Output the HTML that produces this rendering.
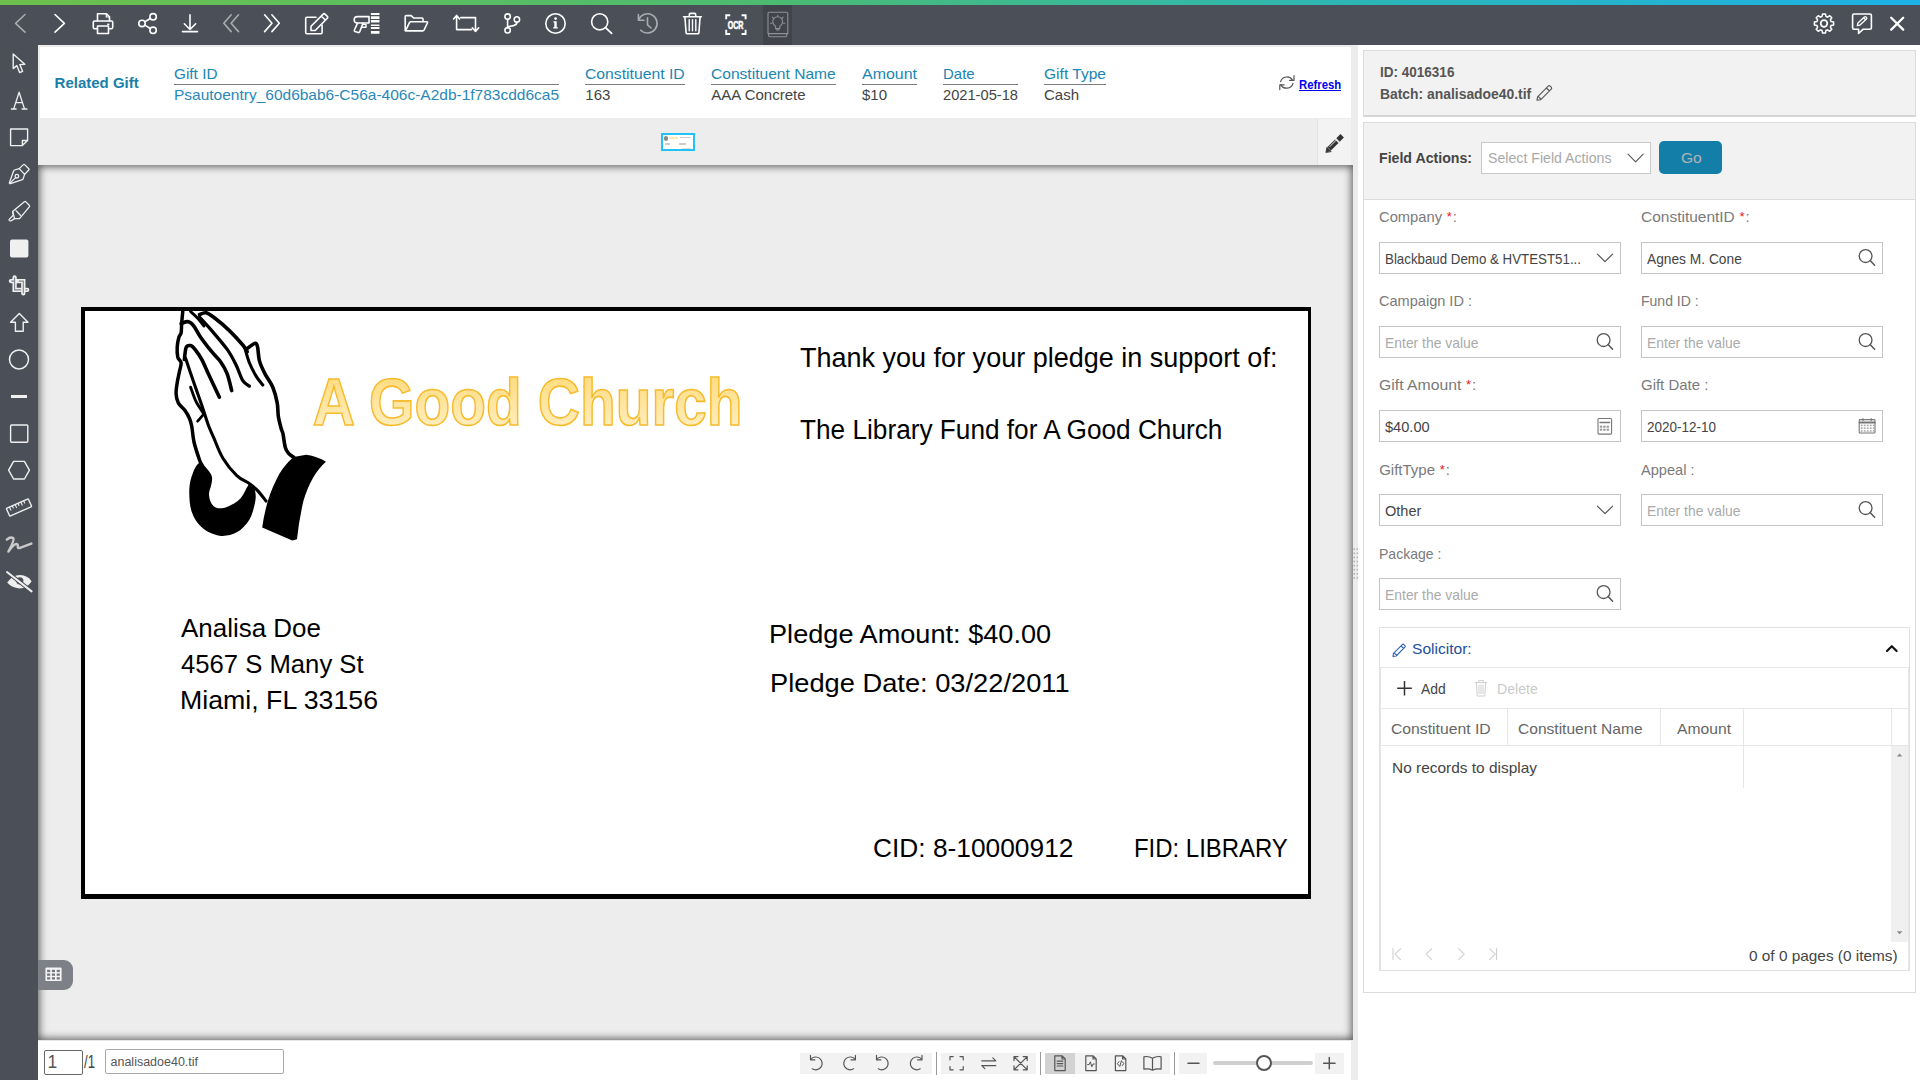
<!DOCTYPE html><html><head><meta charset="utf-8"><style>
*{margin:0;padding:0;box-sizing:border-box}
html,body{width:1920px;height:1080px;overflow:hidden;background:#fff;font-family:"Liberation Sans",sans-serif}
.a{position:absolute}
.t{position:absolute;white-space:pre}
svg{position:absolute;overflow:visible}
</style></head><body>
<div class="a" style="left:0;top:0;width:1920px;height:5px;background:linear-gradient(90deg,#6dc04b 0%,#4cbb72 40%,#2db6b4 70%,#1db1e8 100%)"></div>
<div class="a" style="left:0;top:5px;width:1920px;height:40px;background:#4b4f58"></div>
<div class="a" style="left:0;top:45px;width:38px;height:1035px;background:#4b4f58"></div>
<div class="a" style="left:763px;top:5px;width:29px;height:40px;background:#41444b"></div>
<svg class="a" style="left:0;top:0" width="1920" height="1080" viewBox="0 0 1920 1080" fill="none" stroke="#fff" stroke-width="1.6" stroke-linecap="round" stroke-linejoin="round" ><path d="M25,14.5 L15.6,23.3 L25,32.1" stroke="#a9acb1"/><path d="M55,14.5 L64.4,23.3 L55,32.1"/><path d="M97.5,21 V13.8 H106.5 L109.5,16.8 V21"/><path d="M106.3,14 V17 H109.3" stroke-width="1.2"/><path d="M97.2,28.7 H94.5 Q93.3,28.7 93.3,27.5 V22.3 Q93.3,21 94.5,21 H111.5 Q112.7,21 112.7,22.3 V27.5 Q112.7,28.7 111.5,28.7 H108.8"/><path d="M97.5,26 H108.5 V33.5 H97.5 Z"/><rect x="107.2" y="23.6" width="2.2" height="1.4" fill="#fff" stroke="none"/><circle cx="142" cy="23.4" r="3.2"/><circle cx="153.1" cy="16.8" r="3.2"/><circle cx="153.1" cy="30.3" r="3.2"/><path d="M144.9,21.7 L150.3,18.5 M144.9,25.1 L150.3,28.5"/><path d="M190,14.8 V29.5 M184.3,23.8 L190,29.5 L195.7,23.8 M182.5,31.6 H197.5"/><path d="M231.2,14.8 L223.8,23.2 L231.2,31.6 M238.5,14.8 L231.1,23.2 L238.5,31.6" stroke="#a9acb1"/><path d="M264.6,14.8 L272,23.2 L264.6,31.6 M271.9,14.8 L279.3,23.2 L271.9,31.6"/><path d="M316,17.3 H306.8 Q305.7,17.3 305.7,18.4 V32.6 Q305.7,33.7 306.8,33.7 H321 Q322.1,33.7 322.1,32.6 V25"/><path d="M311,30.5 V26.3 L323.2,14.1 Q324.1,13.2 325,14.1 L327.3,16.4 Q328.2,17.3 327.3,18.2 L315.2,30.5 Z M321.3,16 L325.5,20.2"/><path d="M369,16.6 H357.6 Q354.2,16.6 354.2,19.7 Q354.2,23 357.6,23 H369 Z"/><path d="M357.4,23.4 L354.4,30 Q354,31 355,31.5 L358.2,32.6 Q359.2,32.9 359.6,32 L363,23.4"/><path d="M363.2,24.4 H366 V27.3 H362.4" stroke-width="1.4"/><rect x="370.9" y="13" width="8.6" height="1.9" rx="0.5" fill="#fff" stroke="none"/><rect x="370.9" y="16.3" width="8.6" height="2.8" rx="0.5" fill="#fff" stroke="none"/><rect x="370.9" y="20" width="8.6" height="2.5" rx="0.5" fill="#fff" stroke="none"/><rect x="370.9" y="24.5" width="8.6" height="1.6" rx="0.5" fill="#fff" stroke="none"/><rect x="370.9" y="27" width="8.6" height="2.0" rx="0.5" fill="#fff" stroke="none"/><rect x="370.9" y="31" width="8.6" height="2.8" rx="0.5" fill="#fff" stroke="none"/><path d="M405.2,30.4 V16.6 Q405.2,15.6 406.2,15.6 H411.2 L413.6,18 H422 Q423,18 423,19 V21.6"/><path d="M405.5,30.8 L409.6,22.4 Q410,21.7 410.9,21.7 H426.6 Q427.9,21.7 427.4,23 L424,30.2 Q423.6,30.9 422.8,30.9 H405.8"/><path d="M453.6,19 L456.6,15.4 L459.6,19 M456.6,15.8 V29.6 H471.5 M460.8,17.6 H475.5 V31.5 M472.3,27.8 L475.5,31.5 L478.7,27.8"/><circle cx="507.6" cy="16.6" r="2.7"/><circle cx="507.6" cy="30.3" r="2.7"/><circle cx="516.9" cy="19.4" r="2.7"/><path d="M507.6,19.3 V27.6 M516.9,22.1 Q516.9,25.1 513.6,25.6 L510.2,26.2 Q507.6,26.8 507.6,28"/><circle cx="555.5" cy="23.5" r="9.7"/><circle cx="555.6" cy="18.6" r="1.35" fill="#fff" stroke="none"/><path d="M553.4,21.3 H556.7 V27.2 H557.8 V28.6 H553.2 V27.2 H554.3 V22.6 H553.4 Z" fill="#fff" stroke="none"/><circle cx="599.7" cy="21.8" r="8.1"/><path d="M605.6,27.7 L611.6,33.4" stroke-width="1.8"/><path d="M638.7,19.6 A9.6,9.6 0 1 1 640.7,30.2" stroke="#a9acb1"/><path d="M638.4,14.5 V20.2 H644" stroke="#a9acb1"/><path d="M647.5,17.8 V24.8 L651,28" stroke="#a9acb1"/><path d="M683.5,16.8 H701.4 M689.3,16.6 V14.6 Q689.3,13.4 690.5,13.4 H694.5 Q695.7,13.4 695.7,14.6 V16.6"/><path d="M684.9,17 L686.1,32.6 Q686.2,33.8 687.4,33.8 H697.6 Q698.8,33.8 698.9,32.6 L700.1,17"/><path d="M689.2,19.8 V30.8 M692.5,19.8 V30.8 M695.8,19.8 V30.8" stroke-width="1.4"/><path d="M726.2,19.2 V15.3 H730.2 M741.6,15.3 H745.6 V19.2 M726.2,29.8 V34 H730.2 M741.6,34 H745.6 V29.8" stroke-width="1.9" stroke-linecap="butt" stroke-linejoin="miter"/><text x="735.6" y="28.9" font-family="Liberation Sans" font-weight="bold" font-size="10.6" fill="#fff" stroke="#fff" stroke-width="0.6" text-anchor="middle" textLength="15.8" lengthAdjust="spacingAndGlyphs">OCR</text><path d="M768,33.6 V13.6 Q768,12.3 769.3,12.3 H786.5 Q787.8,12.3 787.8,13.6 V33.6 Z M768.6,33.8 V35.6 Q768.6,36.8 769.8,36.8 H785.6 Q786.8,36.8 786.8,35.6 V33.8" stroke="#8e9197" stroke-width="1.1"/><path d="M775.6,28.6 V26.2 Q772.8,24.6 772.8,21.6 A4.9,4.9 0 0 1 782.6,21.6 Q782.6,24.6 779.8,26.2 V28.6 Z M776.4,30 H779 M777.7,15.2 V16.8 M772.3,17.2 L773.4,18.3 M783.1,17.2 L782,18.3 M770.5,23.2 H771.8 M783.6,23.2 H784.9" stroke="#8e9197" stroke-width="1.1"/><path d="M1831.04,21.55 L1833.59,22.05 L1833.59,24.95 L1831.04,25.45 L1830.35,27.10 L1831.81,29.26 L1829.76,31.31 L1827.60,29.85 L1825.95,30.54 L1825.45,33.09 L1822.55,33.09 L1822.05,30.54 L1820.40,29.85 L1818.24,31.31 L1816.19,29.26 L1817.65,27.10 L1816.96,25.45 L1814.41,24.95 L1814.41,22.05 L1816.96,21.55 L1817.65,19.90 L1816.19,17.74 L1818.24,15.69 L1820.40,17.15 L1822.05,16.46 L1822.55,13.91 L1825.45,13.91 L1825.95,16.46 L1827.60,17.15 L1829.76,15.69 L1831.81,17.74 L1830.35,19.90 Z" stroke-width="1.5"/><circle cx="1824" cy="23.5" r="3.3" stroke-width="1.7"/><path d="M1854,29.2 Q1852.6,29.2 1852.6,27.8 V15.4 Q1852.6,14 1854,14 H1870 Q1871.4,14 1871.4,15.4 V27.8 Q1871.4,29.2 1870,29.2 H1863.2 L1858.6,33.5 V29.2 Z" stroke-width="1.6"/><path d="M1857.3,25.6 L1857.9,23 L1864.4,17 Q1865.2,16.3 1866,17 L1866.5,17.5 Q1867.2,18.3 1866.5,19 L1860,25 Z M1863.8,18 L1865.6,19.8" stroke-width="1.3"/><path d="M1891.2,17.8 L1903.2,29.6 M1903.2,17.8 L1891.2,29.6" stroke-width="2.3"/></svg>
<div class="a" style="left:38px;top:45px;width:1320px;height:120px;background:#ececec"></div>
<div class="a" style="left:40px;top:47px;width:1311px;height:71px;background:#fff"></div>
<div class="t" style="left:54.60px;top:75.30px;font-size:15px;line-height:15px;color:#1a7fa8;font-weight:bold;font-family:'Liberation Sans',sans-serif;">Related Gift</div>
<div class="t" style="left:174.00px;top:66.00px;font-size:15px;line-height:15px;color:#1b86b3;font-weight:normal;font-family:'Liberation Sans',sans-serif;transform:scaleX(1.0232);transform-origin:0 0;">Gift ID</div>
<div class="a" style="left:174.0px;top:83.6px;width:385.0px;height:1.2px;background:#7d7d7d"></div>
<div class="t" style="left:174.00px;top:87.10px;font-size:15px;line-height:15px;color:#2a88b8;font-weight:normal;font-family:'Liberation Sans',sans-serif;transform:scaleX(1.0328);transform-origin:0 0;">Psautoentry_60d6bab6-C56a-406c-A2db-1f783cdd6ca5</div>
<div class="t" style="left:585.30px;top:66.00px;font-size:15px;line-height:15px;color:#1b86b3;font-weight:normal;font-family:'Liberation Sans',sans-serif;transform:scaleX(1.0490);transform-origin:0 0;">Constituent ID</div>
<div class="a" style="left:585.3px;top:83.6px;width:99.7px;height:1.2px;background:#7d7d7d"></div>
<div class="t" style="left:585.30px;top:87.10px;font-size:15px;line-height:15px;color:#444;font-weight:normal;font-family:'Liberation Sans',sans-serif;">163</div>
<div class="t" style="left:711.30px;top:66.00px;font-size:15px;line-height:15px;color:#1b86b3;font-weight:normal;font-family:'Liberation Sans',sans-serif;transform:scaleX(1.0386);transform-origin:0 0;">Constituent Name</div>
<div class="a" style="left:711.3px;top:83.6px;width:124.7px;height:1.2px;background:#7d7d7d"></div>
<div class="t" style="left:711.30px;top:87.10px;font-size:15px;line-height:15px;color:#444;font-weight:normal;font-family:'Liberation Sans',sans-serif;">AAA Concrete</div>
<div class="t" style="left:862.00px;top:66.00px;font-size:15px;line-height:15px;color:#1b86b3;font-weight:normal;font-family:'Liberation Sans',sans-serif;transform:scaleX(1.0638);transform-origin:0 0;">Amount</div>
<div class="a" style="left:862.0px;top:83.6px;width:55.0px;height:1.2px;background:#7d7d7d"></div>
<div class="t" style="left:862.00px;top:87.10px;font-size:15px;line-height:15px;color:#444;font-weight:normal;font-family:'Liberation Sans',sans-serif;">$10</div>
<div class="t" style="left:943.00px;top:66.00px;font-size:15px;line-height:15px;color:#1b86b3;font-weight:normal;font-family:'Liberation Sans',sans-serif;">Date</div>
<div class="a" style="left:943.0px;top:83.6px;width:75.0px;height:1.2px;background:#7d7d7d"></div>
<div class="t" style="left:943.00px;top:87.10px;font-size:15px;line-height:15px;color:#444;font-weight:normal;font-family:'Liberation Sans',sans-serif;transform:scaleX(0.9774);transform-origin:0 0;">2021-05-18</div>
<div class="t" style="left:1044.00px;top:66.00px;font-size:15px;line-height:15px;color:#1b86b3;font-weight:normal;font-family:'Liberation Sans',sans-serif;transform:scaleX(1.0374);transform-origin:0 0;">Gift Type</div>
<div class="a" style="left:1044.0px;top:83.6px;width:62.0px;height:1.2px;background:#7d7d7d"></div>
<div class="t" style="left:1044.00px;top:87.10px;font-size:15px;line-height:15px;color:#444;font-weight:normal;font-family:'Liberation Sans',sans-serif;">Cash</div>
<svg class="a" style="left:0;top:0" width="1920" height="1080" viewBox="0 0 1920 1080" fill="none" stroke="#555" stroke-width="1.2" stroke-linecap="round" stroke-linejoin="round" ><path d="M1292.6,80.2 A6.6,6.6 0 0 0 1280.6,81.6" /><path d="M1280.8,84.6 A6.6,6.6 0 0 0 1293,83.4"/><path d="M1294,75.6 V80.4 H1289.6 M1279.8,89.6 V84.8 H1284.2"/></svg>
<div class="t" style="left:1298.80px;top:78.94px;font-size:12px;line-height:12px;color:#0000ee;font-weight:bold;font-family:'Liberation Sans',sans-serif;transform:scaleX(0.9443);transform-origin:0 0;">Refresh</div>
<div class="a" style="left:1298.6px;top:89.6px;width:42.4px;height:1.2px;background:#0000ee"></div>
<div class="a" style="left:38px;top:118px;width:1314px;height:47px;background:#ededed"></div>
<div class="a" style="left:1317px;top:119px;width:34px;height:46px;background:#f3f3f3;border-left:1px solid #e2e2e2"></div>
<svg class="a" style="left:0;top:0" width="1920" height="1080" viewBox="0 0 1920 1080" fill="none" stroke="none" stroke-width="1.6" stroke-linecap="round" stroke-linejoin="round" ><path d="M1329.2,148.8 L1336.8,141.2" stroke="#333" stroke-width="4.8" stroke-linecap="butt"/><path d="M1338,140 L1342.2,135.8" stroke="#333" stroke-width="4.8" stroke-linecap="butt" stroke-linejoin="round"/><path d="M1326,152.2 L1326.9,147.3 L1331,151.3 Z" fill="#333" stroke="#333" stroke-width="0.8"/><path d="M1329.8,146.6 L1336.4,140" stroke="#f3f3f3" stroke-width="0.9"/></svg>
<div class="a" style="left:660.5px;top:133.3px;width:34px;height:18.2px;border:2px solid #22c1f8;background:#fff"></div>
<div class="a" style="left:664px;top:136px;width:4px;height:5px;background:#555;border-radius:2px;opacity:.7"></div>
<div class="a" style="left:669px;top:137px;width:9px;height:1.5px;background:#ffe9a8"></div>
<div class="a" style="left:680px;top:136.5px;width:11px;height:1px;background:#ccc"></div>
<div class="a" style="left:665px;top:143px;width:5px;height:2px;background:#ccc"></div>
<div class="a" style="left:679px;top:143px;width:7px;height:1.5px;background:#ccc"></div>
<div class="a" style="left:682px;top:148px;width:9px;height:1px;background:#ddd"></div>
<div class="a" style="left:1351px;top:45px;width:7px;height:1035px;background:#ececec"></div>
<div class="a" style="left:38px;top:165px;width:1315px;height:875px;background:#ededed;box-shadow:inset 0 0 8px 1px rgba(0,0,0,.68)"></div>
<svg class="a" style="left:0;top:0" width="1920" height="1080" viewBox="0 0 1920 1080" fill="#b2b2b2" stroke="none" stroke-width="1.6" stroke-linecap="round" stroke-linejoin="round" ><rect x="1353.4" y="548.4" width="1.6" height="1.6"/><rect x="1356.6" y="548.4" width="1.6" height="1.6"/><rect x="1353.4" y="552.5" width="1.6" height="1.6"/><rect x="1356.6" y="552.5" width="1.6" height="1.6"/><rect x="1353.4" y="556.6" width="1.6" height="1.6"/><rect x="1356.6" y="556.6" width="1.6" height="1.6"/><rect x="1353.4" y="560.7" width="1.6" height="1.6"/><rect x="1356.6" y="560.7" width="1.6" height="1.6"/><rect x="1353.4" y="564.8" width="1.6" height="1.6"/><rect x="1356.6" y="564.8" width="1.6" height="1.6"/><rect x="1353.4" y="568.9" width="1.6" height="1.6"/><rect x="1356.6" y="568.9" width="1.6" height="1.6"/><rect x="1353.4" y="573.0" width="1.6" height="1.6"/><rect x="1356.6" y="573.0" width="1.6" height="1.6"/><rect x="1353.4" y="577.1" width="1.6" height="1.6"/><rect x="1356.6" y="577.1" width="1.6" height="1.6"/></svg>
<div class="a" style="left:81px;top:307px;width:1230px;height:592px;background:#fff;border:solid #000;border-width:4px 3px 5px 4px"></div>
<div class="t" style="left:800.10px;top:344.14px;font-size:27.6px;line-height:27.6px;color:#000;font-weight:normal;font-family:'Liberation Sans',sans-serif;transform:scaleX(0.9787);transform-origin:0 0;">Thank you for your pledge in support of:</div>
<div class="t" style="left:800.10px;top:416.64px;font-size:27.0px;line-height:27.0px;color:#000;font-weight:normal;font-family:'Liberation Sans',sans-serif;transform:scaleX(0.9705);transform-origin:0 0;">The Library Fund for A Good Church</div>
<div class="t" style="left:181.40px;top:614.62px;font-size:26.2px;line-height:26.2px;color:#000;font-weight:normal;font-family:'Liberation Sans',sans-serif;transform:scaleX(0.9914);transform-origin:0 0;">Analisa Doe</div>
<div class="t" style="left:180.60px;top:650.62px;font-size:26.2px;line-height:26.2px;color:#000;font-weight:normal;font-family:'Liberation Sans',sans-serif;transform:scaleX(0.9799);transform-origin:0 0;">4567 S Many St</div>
<div class="t" style="left:179.90px;top:686.92px;font-size:26.2px;line-height:26.2px;color:#000;font-weight:normal;font-family:'Liberation Sans',sans-serif;transform:scaleX(1.0202);transform-origin:0 0;">Miami, FL 33156</div>
<div class="t" style="left:768.70px;top:620.82px;font-size:26.2px;line-height:26.2px;color:#000;font-weight:normal;font-family:'Liberation Sans',sans-serif;transform:scaleX(1.0364);transform-origin:0 0;">Pledge Amount: $40.00</div>
<div class="t" style="left:770.00px;top:669.52px;font-size:26.2px;line-height:26.2px;color:#000;font-weight:normal;font-family:'Liberation Sans',sans-serif;transform:scaleX(1.0410);transform-origin:0 0;">Pledge Date: 03/22/2011</div>
<div class="t" style="left:873.40px;top:835.28px;font-size:26.6px;line-height:26.6px;color:#000;font-weight:normal;font-family:'Liberation Sans',sans-serif;transform:scaleX(0.9894);transform-origin:0 0;">CID: 8-10000912</div>
<div class="t" style="left:1134.20px;top:835.28px;font-size:26.6px;line-height:26.6px;color:#000;font-weight:normal;font-family:'Liberation Sans',sans-serif;transform:scaleX(0.8997);transform-origin:0 0;">FID: LIBRARY</div>
<svg class="a" style="left:0;top:0" width="1920" height="1080" viewBox="0 0 1920 1080"><defs><linearGradient id="yg" x1="0" y1="0" x2="0" y2="1"><stop offset="0" stop-color="#fed872"/><stop offset="1" stop-color="#fff1ca"/></linearGradient></defs><text x="312.8" y="424.8" font-family="Liberation Sans" font-weight="bold" font-size="66" fill="url(#yg)" stroke="#f8bb2c" stroke-width="1.6" textLength="429.6" lengthAdjust="spacingAndGlyphs">A Good Church</text></svg>
<svg class="a" style="left:165px;top:300px" width="170" height="245" viewBox="165 300 170 245"><path d="M199.7,462.8 C197.2,463.4 194.5,468.8 192.8,473.2 C191.1,477.6 189.5,483.0 189.3,489.4 C189.1,495.8 189.5,505.0 191.6,511.4 C193.7,517.8 197.4,523.5 202.0,527.6 C206.6,531.7 213.6,534.9 219.4,535.7 C225.2,536.5 231.8,535.0 236.8,532.3 C241.8,529.6 246.4,524.7 249.5,519.5 C252.6,514.3 254.4,506.0 255.3,501.0 C256.2,496.0 255.5,492.4 254.7,489.4 C253.9,486.4 251.8,483.5 250.6,483.1 C249.3,482.7 248.9,484.5 247.2,487.1 C245.5,489.7 243.5,495.4 240.2,498.7 C236.9,502.0 231.3,505.2 227.5,506.8 C223.7,508.4 219.8,508.6 217.1,508.0 C214.4,507.4 212.7,505.6 211.3,503.3 C210.0,501.0 209.0,497.2 209.0,494.1 C209.0,491.0 210.8,487.7 211.3,484.8 C211.8,481.9 212.5,479.2 211.9,476.7 C211.3,474.2 209.8,472.1 207.8,469.8 C205.8,467.5 202.2,462.2 199.7,462.8 Z" fill="#000"/><path d="M293.5,457 L306.2,454.7 Q318,456.5 325.9,461.7 Q311,475 303.4,501 Q298.6,522 297,539.2 L292.3,540.4 L262.2,527.6 Q266,500 276.1,480.2 Q282,467 293.5,457 Z" fill="#000"/><path d="M182.8,311.1 C182.6,313.1 182.0,319.2 181.7,322.8 C181.4,326.4 181.6,330.4 181.1,332.8 C180.6,335.2 179.6,334.8 178.9,337.2 C178.2,339.6 177.4,343.9 177.2,347.2 C177.0,350.5 177.2,354.6 177.8,357.2 C178.5,359.8 180.8,360.4 181.1,362.8 C181.4,365.2 180.1,368.4 179.4,371.7 C178.8,375.0 177.8,379.1 177.2,382.8 C176.6,386.5 175.9,390.6 176.1,393.9 C176.3,397.2 176.8,400.0 178.3,402.8 C179.8,405.6 183.2,408.0 185.0,410.6 C186.8,413.2 188.3,415.7 189.4,418.3 C190.5,420.9 190.9,422.1 191.7,426.0 C192.5,429.9 192.7,436.2 194.0,442.0 C195.3,447.8 198.4,456.7 199.7,460.5 C201.0,464.3 201.6,464.2 202.0,465.0" fill="none" stroke="#000" stroke-width="3.5" stroke-linecap="round" stroke-linejoin="round"/><path d="M181.1,323.5 C182.3,323.2 186.2,321.3 188.3,321.7 C190.4,322.1 191.9,323.5 193.9,326.1 C195.9,328.7 197.6,332.9 200.6,337.2 C203.6,341.5 208.4,347.6 211.7,351.7 C215.0,355.8 218.0,358.0 220.6,361.7 C223.2,365.4 225.3,369.1 227.2,373.9 C229.0,378.7 230.9,387.8 231.7,390.6" fill="none" stroke="#000" stroke-width="3.6" stroke-linecap="round" stroke-linejoin="round"/><path d="M184.4,359.4 C184.7,357.4 185.1,349.9 186.1,347.6 C187.1,345.3 189.1,345.3 190.6,345.6 C192.1,345.9 193.2,347.1 195.0,349.4 C196.8,351.7 199.3,354.9 201.7,359.4 C204.1,363.8 206.4,369.8 209.4,376.1 C212.4,382.4 217.7,393.7 219.4,397.2" fill="none" stroke="#000" stroke-width="3.6" stroke-linecap="round" stroke-linejoin="round"/><path d="M185.6,358.3 C187.0,362.4 191.2,375.0 193.9,382.8 C196.6,390.6 199.3,398.0 201.7,405.0 C204.1,412.0 206.3,419.6 208.3,425.0 C210.3,430.4 211.2,431.9 213.6,437.4 C216.0,442.9 219.0,451.8 222.9,458.2 C226.8,464.6 232.4,471.4 236.8,475.6 C241.2,479.9 246.0,481.2 249.5,483.7 C253.0,486.2 254.9,487.7 257.6,490.6 C260.4,493.5 264.6,499.3 266.0,501.0" fill="none" stroke="#000" stroke-width="3.1" stroke-linecap="round" stroke-linejoin="round"/><path d="M190.6,387.2 C191.5,389.6 193.9,397.2 196.1,401.7 C198.3,406.1 202.6,411.9 203.9,413.9" fill="none" stroke="#000" stroke-width="2.9" stroke-linecap="round" stroke-linejoin="round"/><path d="M203.9,413.9 C202.8,415.1 198.7,420.0 197.6,421.2" fill="none" stroke="#000" stroke-width="2.7" stroke-linecap="round" stroke-linejoin="round"/><path d="M199.5,314.6 C200.6,314.3 203.5,312.2 206.1,312.8 C208.7,313.4 211.1,315.3 215.0,318.3 C218.9,321.3 224.8,326.2 229.4,330.6 C234.0,335.1 239.8,341.5 242.8,345.0 C245.8,348.5 246.5,350.6 247.2,351.7" fill="none" stroke="#000" stroke-width="3.6" stroke-linecap="round" stroke-linejoin="round"/><path d="M246.0,349.5 C247.5,348.5 253.1,343.7 255.0,343.3 C256.9,342.9 256.9,344.3 257.6,347.2 C258.3,350.1 258.2,356.2 259.4,360.6 C260.6,365.1 262.8,369.5 265.0,373.9 C267.2,378.3 270.8,382.4 272.8,387.2 C274.8,392.0 276.3,398.0 277.2,402.8 C278.1,407.6 277.7,411.9 278.3,416.1 C278.9,420.3 280.2,425.0 281.0,428.0 C281.8,431.0 282.3,430.6 283.0,433.9 C283.7,437.2 284.4,444.5 285.4,447.8 C286.4,451.1 287.4,452.0 288.8,453.6 C290.2,455.2 293.1,456.9 294.0,457.5" fill="none" stroke="#000" stroke-width="3.6" stroke-linecap="round" stroke-linejoin="round"/><path d="M199.5,317.2 C201.5,319.4 207.1,325.2 211.7,330.6 C216.3,336.0 223.1,343.7 227.2,349.4 C231.3,355.1 233.5,359.8 236.1,365.0 C238.7,370.2 240.6,377.1 242.8,380.6 C245.0,384.1 248.3,385.2 249.4,386.1" fill="none" stroke="#000" stroke-width="3.3" stroke-linecap="round" stroke-linejoin="round"/><path d="M245.0,348.3 C245.7,350.7 247.6,358.2 249.4,362.8 C251.2,367.4 253.9,372.4 256.1,376.1 C258.3,379.8 261.7,383.5 262.8,385.0" fill="none" stroke="#000" stroke-width="3.1" stroke-linecap="round" stroke-linejoin="round"/><path d="M190.5,311.5 C191.5,312.4 194.2,314.6 196.5,317.0 C198.8,319.4 202.8,324.5 204.0,326.0" fill="none" stroke="#000" stroke-width="2.9" stroke-linecap="round" stroke-linejoin="round"/></svg>
<div class="a" style="left:38px;top:1040px;width:1313px;height:40px;background:#fff;border-top:1px solid #e6e6e6"></div>
<div class="a" style="left:44.3px;top:1050px;width:38.3px;height:24.5px;border:1px solid #666;border-radius:2px;background:#fff"></div>
<div class="t" style="left:47.60px;top:1053.99px;font-size:17.5px;line-height:17.5px;color:#555;font-weight:normal;font-family:'Liberation Sans',sans-serif;">1</div>
<div class="t" style="left:84.20px;top:1053.99px;font-size:17.5px;line-height:17.5px;color:#444;font-weight:normal;font-family:'Liberation Sans',sans-serif;transform:scaleX(0.7529);transform-origin:0 0;">/1</div>
<div class="a" style="left:104.5px;top:1049.3px;width:179.3px;height:25.2px;border:1px solid #aaa;border-radius:2px;background:#fff"></div>
<div class="t" style="left:110.50px;top:1056.22px;font-size:12.5px;line-height:12.5px;color:#555;font-weight:normal;font-family:'Liberation Sans',sans-serif;">analisadoe40.tif</div>
<div class="a" style="left:38px;top:959.8px;width:35px;height:30.2px;background:#7d8187;border-radius:0 9px 9px 0"></div>
<svg class="a" style="left:0;top:0" width="1920" height="1080" viewBox="0 0 1920 1080" fill="none" stroke="none" stroke-width="1.6" stroke-linecap="round" stroke-linejoin="round" ><rect x="45.4" y="967.4" width="16.2" height="13.7" rx="1.2" fill="#f4f4f4"/><rect x="47.1" y="969.8" width="3.1" height="2.3" fill="#74777d"/><rect x="47.1" y="973.5" width="3.1" height="2.3" fill="#74777d"/><rect x="47.1" y="977.2" width="3.1" height="2.3" fill="#74777d"/><rect x="51.9" y="969.8" width="3.1" height="2.3" fill="#74777d"/><rect x="51.9" y="973.5" width="3.1" height="2.3" fill="#74777d"/><rect x="51.9" y="977.2" width="3.1" height="2.3" fill="#74777d"/><rect x="56.7" y="969.8" width="3.1" height="2.3" fill="#74777d"/><rect x="56.7" y="973.5" width="3.1" height="2.3" fill="#74777d"/><rect x="56.7" y="977.2" width="3.1" height="2.3" fill="#74777d"/></svg>
<div class="a" style="left:799.7px;top:1052.5px;width:132.5px;height:21.3px;background:#f2f2f2"></div>
<div class="a" style="left:936px;top:1052px;width:1px;height:23px;background:#9a9a9a"></div>
<div class="a" style="left:941px;top:1052.5px;width:94.6px;height:21.3px;background:#f2f2f2"></div>
<div class="a" style="left:1040px;top:1052px;width:1px;height:23px;background:#9a9a9a"></div>
<div class="a" style="left:1045px;top:1052.5px;width:124.7px;height:21.3px;background:#f2f2f2"></div>
<div class="a" style="left:1045px;top:1052.5px;width:29.7px;height:21.3px;background:#d2d2d2"></div>
<div class="a" style="left:1174px;top:1052px;width:1px;height:23px;background:#9a9a9a"></div>
<div class="a" style="left:1179.4px;top:1052.5px;width:28.1px;height:21.3px;background:#f2f2f2"></div>
<div class="a" style="left:1315px;top:1052.5px;width:29px;height:21.3px;background:#f2f2f2"></div>
<div class="a" style="left:1212.8px;top:1061.3px;width:100px;height:3.6px;background:#cfcfcf;border-radius:2px"></div>
<div class="a" style="left:1256.4px;top:1055.2px;width:16px;height:16px;border:2px solid #555;border-radius:50%;background:#fff"></div>
<svg class="a" style="left:0;top:0" width="1920" height="1080" viewBox="0 0 1920 1080" fill="none" stroke="#555" stroke-width="1.2" stroke-linecap="round" stroke-linejoin="round" ><g><path d="M810.9,1059.2 A6.4,6.4 0 1 1 812.3,1068.8" /><path d="M810.5,1055.4 V1059.8 H814.9"/></g><g transform="translate(1698.8,0) scale(-1,1)"><path d="M843.8,1059.2 A6.4,6.4 0 1 1 845.1999999999999,1068.8" /><path d="M843.4,1055.4 V1059.8 H847.8"/></g><g><path d="M876.9,1059.2 A6.4,6.4 0 1 1 878.3,1068.8" /><path d="M876.5,1055.4 V1059.8 H880.9"/></g><g transform="translate(1832,0) scale(-1,1)"><path d="M910.4,1059.2 A6.4,6.4 0 1 1 911.8,1068.8" /><path d="M910,1055.4 V1059.8 H914.4"/></g><path d="M950.0,1059.8 V1056.6000000000001 H953.2 M960.0,1056.6000000000001 H963.2 V1059.8 M950.0,1066.6000000000001 V1069.8 H953.2 M960.0,1069.8 H963.2 V1066.6000000000001"/><path d="M981.8,1060.8 H995.8 L992.8,1057.8 M995.8,1065.6000000000001 H981.8 L984.8,1068.6000000000001"/><path d="M1014.2,1056.8 L1027.0,1069.6000000000001 M1027.0,1056.8 L1014.2,1069.6000000000001 M1014.0,1060.6000000000001 V1056.6000000000001 H1018.0 M1023.2,1056.6000000000001 H1027.2 V1060.6000000000001 M1014.0,1065.8 V1069.8 H1018.0 M1023.2,1069.8 H1027.2 V1065.8"/><path d="M1054.8,1055.8 H1062.2 L1065.2,1058.8 V1070.6000000000001 H1054.8 Z M1062,1056.0 V1059.0 H1065"/><path d="M1085.8,1055.8 H1093.2 L1096.2,1058.8 V1070.6000000000001 H1085.8 Z M1093,1056.0 V1059.0 H1096"/><path d="M1115.3999999999999,1055.8 H1122.8 L1125.8,1058.8 V1070.6000000000001 H1115.3999999999999 Z M1122.6,1056.0 V1059.0 H1125.6"/><path d="M1057.2,1061.2 H1062.8 M1057.2,1063.6 H1062.8 M1057.2,1066 H1062.8"/><path d="M1087.6,1064.6 H1089.2 L1090.4,1061.8 L1091.8,1066.8 L1093,1064 H1094.4" stroke-width="1"/><path d="M1119,1061.6 L1117.4,1063.6 L1119,1065.6 M1122.2,1061.6 L1123.8,1063.6 L1122.2,1065.6 M1121.4,1060.8 L1119.8,1066.4" stroke-width="1"/><path d="M1152.5,1058.2 Q1148.5,1055.8 1143.9,1056.8 V1069.2 Q1148.5,1068.2 1152.5,1070.2 Q1156.5,1068.2 1161.1,1069.2 V1056.8 Q1156.5,1055.8 1152.5,1058.2 V1070.2"/><path d="M1188,1063.2 H1199 M1323.6,1063.2 H1335 M1329.3,1057.6000000000001 V1068.8" stroke-width="1.5"/></svg>
<svg class="a" style="left:0;top:0" width="1920" height="1080" viewBox="0 0 1920 1080" fill="none" stroke="#f0f0f0" stroke-width="1.6" stroke-linecap="round" stroke-linejoin="round" ><path d="M13.2,54 V68.6 L16.8,65.6 L19.6,72.6 L22.6,71.3 L19.8,64.6 L24.8,64.2 Z" stroke-width="1.4"/><path d="M13.7,108.9 L19.1,92.2 L24.5,108.9 M15.8,102.6 H22.4 M10.9,109 H16.6 M21.6,109 H27.4" stroke-width="1.3" stroke-linecap="butt"/><path d="M10.6,129 H27.6 V140.5 L22.3,145.6 H10.6 Z M27.4,140.5 H22.4 V145.4" stroke-width="1.4"/><path d="M19.2,168.6 L23.4,164.6 Q24,164 24.6,164.6 L28.8,168.8 Q29.4,169.4 28.8,170 L24.6,174.4 Z" stroke-width="1.3"/><path d="M19.2,168.6 L14.6,170 Q13.8,170.3 13.6,171 L9.4,182.6 Q9.2,183.8 10.4,183.6 L22.4,179.6 Q23,179.4 23.2,178.6 L24.6,174.4" stroke-width="1.3"/><circle cx="16.9" cy="176.2" r="1.8" stroke-width="1.3"/><path d="M15.6,177.6 L9.8,183.2" stroke-width="1.2"/><path d="M12.6,211.4 L24.4,201.8 Q25.2,201.2 25.9,201.9 L29.2,205.3 Q29.9,206 29.3,206.8 L19.5,218.6 L14.6,218.6 Z" stroke-width="1.3"/><path d="M16,210.6 L20.4,215.2" stroke-width="1.3"/><path d="M12.6,211.6 L13.4,215 L9.2,219.4 Q8.8,220.2 9.6,220.6 L10.8,221 L14.6,218.6" stroke-width="1.3"/><rect x="10" y="239.4" width="18.4" height="18" rx="2" fill="#f0f0f0" stroke="none"/><path d="M14.6,277.4 V289.9 H27.2 M10.9,281.1 H23.3 V293.4" stroke-width="4.3" stroke-linecap="round" stroke-linejoin="miter"/><path d="M14.6,277.2 V289.9 H21.2 M11.2,281.1 H14.2 M18.8,281.1 H23.3 V293.6 M25.4,289.9 H27.4" stroke="#80848a" stroke-width="1.1" stroke-linecap="butt" stroke-linejoin="miter"/><path d="M19.3,313.6 L10.6,322.2 H15.4 V331.2 H23.2 V322.2 H28 Z" stroke-width="1.4"/><circle cx="19" cy="359.4" r="9.5" stroke-width="1.5"/><rect x="11" y="395" width="16" height="3" fill="#f0f0f0" stroke="none"/><rect x="10.6" y="425" width="17.2" height="17.2" rx="1" stroke-width="1.4"/><path d="M8.6,470.2 L13.6,461.4 H24.4 L29.4,470.2 L24.4,479 H13.6 Z" stroke-width="1.4"/><g transform="rotate(-24 19 507.5)"><rect x="7" y="503.2" width="24" height="8.6" rx="0.8" stroke-width="1.4"/><path d="M10.5,503.4 V506.6 M13.6,503.4 V505.6 M16.7,503.4 V506.6 M19.8,503.4 V505.6 M22.9,503.4 V506.6 M26,503.4 V505.6" stroke-width="1.1"/></g><path d="M6.8,539.6 Q10.6,536.2 13.4,538.2 Q14.6,540.2 8.4,551.6 Q13.2,544.4 16.2,544 Q18.4,544 17.8,547 Q18,548.8 20.6,547.6 L31.4,543.6" stroke="#c9c9c9" stroke-width="2.4"/><path d="M7.2,582.6 Q12.4,574.8 20.2,575 Q27.6,575.2 31.6,581.2 Q27.4,588.4 19.6,588.4 Q11.8,588.2 7.2,582.6 Z" fill="#f0f0f0" stroke="none"/><circle cx="19.8" cy="580.8" r="3.6" fill="#4b4f58" stroke="none"/><path d="M7,572 L31.6,591.4" stroke="#4b4f58" stroke-width="4"/><path d="M7,572 L31.6,591.4" stroke="#f0f0f0" stroke-width="2"/></svg>
<div class="a" style="left:1358px;top:45px;width:562px;height:1035px;background:#fff"></div>
<div class="a" style="left:1363px;top:50px;width:553px;height:67px;background:#f2f2f2;border:1px solid #dcdcdc;border-bottom:2px solid #d6d6d6"></div>
<div class="t" style="left:1379.60px;top:64.95px;font-size:14px;line-height:14px;color:#555;font-weight:bold;font-family:'Liberation Sans',sans-serif;transform:scaleX(0.9655);transform-origin:0 0;">ID: 4016316</div>
<div class="t" style="left:1379.60px;top:87.35px;font-size:14px;line-height:14px;color:#555;font-weight:bold;font-family:'Liberation Sans',sans-serif;transform:scaleX(0.9915);transform-origin:0 0;">Batch: analisadoe40.tif</div>
<svg class="a" style="left:0;top:0" width="1920" height="1080" viewBox="0 0 1920 1080" fill="none" stroke="#555" stroke-width="1.1" stroke-linecap="round" stroke-linejoin="round" ><path d="M1537,100.2 L1537.6,96.8 L1548.2,86.2 Q1549.2,85.2 1550.2,86.2 L1551.2,87.2 Q1552.2,88.2 1551.2,89.2 L1540.6,99.8 Z M1546.4,88 L1549.4,91 M1538.2,96.4 L1540.8,99" stroke="#555"/></svg>
<div class="a" style="left:1363px;top:122px;width:553px;height:871px;background:#fff;border:1px solid #dcdcdc"></div>
<div class="a" style="left:1364px;top:123px;width:551px;height:77px;background:#f2f2f2;border-bottom:1px solid #dcdcdc"></div>
<div class="t" style="left:1379.40px;top:151.45px;font-size:14px;line-height:14px;color:#444;font-weight:bold;font-family:'Liberation Sans',sans-serif;transform:scaleX(1.0104);transform-origin:0 0;">Field Actions:</div>
<div class="a" style="left:1481.2px;top:142.3px;width:169.4px;height:31.5px;background:#fff;border:1px solid #c9c9c9"></div>
<div class="t" style="left:1487.50px;top:151.03px;font-size:14.5px;line-height:14.5px;color:#a9a9a9;font-weight:normal;font-family:'Liberation Sans',sans-serif;transform:scaleX(0.9759);transform-origin:0 0;">Select Field Actions</div>
<svg class="a" style="left:0;top:0" width="1920" height="1080" viewBox="0 0 1920 1080" fill="none" stroke="#555" stroke-width="1.1" stroke-linecap="round" stroke-linejoin="round" ><path d="M1628,154.2 L1635.6,161.8 L1643.2,154.2" stroke="#555" stroke-width="1.1"/></svg>
<div class="a" style="left:1659px;top:140.8px;width:63px;height:33px;background:#137fa8;border-radius:5px"></div>
<div class="t" style="left:1680.50px;top:149.90px;font-size:15px;line-height:15px;color:#b4b4b4;font-weight:normal;font-family:'Liberation Sans',sans-serif;transform:scaleX(1.0392);transform-origin:0 0;">Go</div>
<div class="t" style="left:1379.20px;top:208.70px;font-size:15px;line-height:15px;color:#7a7a7a;font-weight:normal;font-family:'Liberation Sans',sans-serif;transform:scaleX(0.9813);transform-origin:0 0;">Company</div>
<div class="t" style="left:1446.80px;top:209.80px;font-size:13px;line-height:13px;color:#e8141c;font-weight:normal;font-family:'Liberation Sans',sans-serif;">*</div>
<div class="t" style="left:1452.80px;top:208.70px;font-size:15px;line-height:15px;color:#7a7a7a;font-weight:normal;font-family:'Liberation Sans',sans-serif;">:</div>
<div class="a" style="left:1379px;top:242px;width:242px;height:32px;background:#fff;border:1px solid #c4c4c4"></div>
<div class="t" style="left:1385.40px;top:251.91px;font-size:14.4px;line-height:14.4px;color:#444;font-weight:normal;font-family:'Liberation Sans',sans-serif;transform:scaleX(0.9247);transform-origin:0 0;">Blackbaud Demo &amp; HVTEST51...</div>
<div class="t" style="left:1641.20px;top:208.70px;font-size:15px;line-height:15px;color:#7a7a7a;font-weight:normal;font-family:'Liberation Sans',sans-serif;transform:scaleX(1.0320);transform-origin:0 0;">ConstituentID</div>
<div class="t" style="left:1739.60px;top:209.80px;font-size:13px;line-height:13px;color:#e8141c;font-weight:normal;font-family:'Liberation Sans',sans-serif;">*</div>
<div class="t" style="left:1745.60px;top:208.70px;font-size:15px;line-height:15px;color:#7a7a7a;font-weight:normal;font-family:'Liberation Sans',sans-serif;">:</div>
<div class="a" style="left:1641px;top:242px;width:242px;height:32px;background:#fff;border:1px solid #c4c4c4"></div>
<div class="t" style="left:1647.40px;top:251.91px;font-size:14.4px;line-height:14.4px;color:#444;font-weight:normal;font-family:'Liberation Sans',sans-serif;transform:scaleX(0.9556);transform-origin:0 0;">Agnes M. Cone</div>
<div class="t" style="left:1379.20px;top:293.00px;font-size:15px;line-height:15px;color:#7a7a7a;font-weight:normal;font-family:'Liberation Sans',sans-serif;transform:scaleX(0.9700);transform-origin:0 0;">Campaign ID :</div>
<div class="a" style="left:1379px;top:326px;width:242px;height:32px;background:#fff;border:1px solid #c4c4c4"></div>
<div class="t" style="left:1385.40px;top:335.91px;font-size:14.4px;line-height:14.4px;color:#aaa;font-weight:normal;font-family:'Liberation Sans',sans-serif;transform:scaleX(0.9668);transform-origin:0 0;">Enter the value</div>
<div class="t" style="left:1641.20px;top:293.00px;font-size:15px;line-height:15px;color:#7a7a7a;font-weight:normal;font-family:'Liberation Sans',sans-serif;transform:scaleX(0.9351);transform-origin:0 0;">Fund ID :</div>
<div class="a" style="left:1641px;top:326px;width:242px;height:32px;background:#fff;border:1px solid #c4c4c4"></div>
<div class="t" style="left:1647.40px;top:335.91px;font-size:14.4px;line-height:14.4px;color:#aaa;font-weight:normal;font-family:'Liberation Sans',sans-serif;transform:scaleX(0.9668);transform-origin:0 0;">Enter the value</div>
<div class="t" style="left:1379.20px;top:377.20px;font-size:15px;line-height:15px;color:#7a7a7a;font-weight:normal;font-family:'Liberation Sans',sans-serif;transform:scaleX(1.0501);transform-origin:0 0;">Gift Amount</div>
<div class="t" style="left:1466.10px;top:378.30px;font-size:13px;line-height:13px;color:#e8141c;font-weight:normal;font-family:'Liberation Sans',sans-serif;">*</div>
<div class="t" style="left:1472.10px;top:377.20px;font-size:15px;line-height:15px;color:#7a7a7a;font-weight:normal;font-family:'Liberation Sans',sans-serif;">:</div>
<div class="a" style="left:1379px;top:410px;width:242px;height:32px;background:#fff;border:1px solid #c4c4c4"></div>
<div class="t" style="left:1385.40px;top:419.91px;font-size:14.4px;line-height:14.4px;color:#444;font-weight:normal;font-family:'Liberation Sans',sans-serif;transform:scaleX(1.0133);transform-origin:0 0;">$40.00</div>
<div class="t" style="left:1641.20px;top:377.20px;font-size:15px;line-height:15px;color:#7a7a7a;font-weight:normal;font-family:'Liberation Sans',sans-serif;transform:scaleX(0.9966);transform-origin:0 0;">Gift Date :</div>
<div class="a" style="left:1641px;top:410px;width:242px;height:32px;background:#fff;border:1px solid #c4c4c4"></div>
<div class="t" style="left:1647.40px;top:419.91px;font-size:14.4px;line-height:14.4px;color:#444;font-weight:normal;font-family:'Liberation Sans',sans-serif;transform:scaleX(0.9372);transform-origin:0 0;">2020-12-10</div>
<div class="t" style="left:1379.20px;top:461.50px;font-size:15px;line-height:15px;color:#7a7a7a;font-weight:normal;font-family:'Liberation Sans',sans-serif;">GiftType</div>
<div class="t" style="left:1439.80px;top:462.60px;font-size:13px;line-height:13px;color:#e8141c;font-weight:normal;font-family:'Liberation Sans',sans-serif;">*</div>
<div class="t" style="left:1445.80px;top:461.50px;font-size:15px;line-height:15px;color:#7a7a7a;font-weight:normal;font-family:'Liberation Sans',sans-serif;">:</div>
<div class="a" style="left:1379px;top:494px;width:242px;height:32px;background:#fff;border:1px solid #c4c4c4"></div>
<div class="t" style="left:1385.40px;top:503.91px;font-size:14.4px;line-height:14.4px;color:#444;font-weight:normal;font-family:'Liberation Sans',sans-serif;transform:scaleX(1.0111);transform-origin:0 0;">Other</div>
<div class="t" style="left:1641.20px;top:461.50px;font-size:15px;line-height:15px;color:#7a7a7a;font-weight:normal;font-family:'Liberation Sans',sans-serif;transform:scaleX(0.9737);transform-origin:0 0;">Appeal :</div>
<div class="a" style="left:1641px;top:494px;width:242px;height:32px;background:#fff;border:1px solid #c4c4c4"></div>
<div class="t" style="left:1647.40px;top:503.91px;font-size:14.4px;line-height:14.4px;color:#aaa;font-weight:normal;font-family:'Liberation Sans',sans-serif;transform:scaleX(0.9668);transform-origin:0 0;">Enter the value</div>
<div class="t" style="left:1379.20px;top:545.70px;font-size:15px;line-height:15px;color:#7a7a7a;font-weight:normal;font-family:'Liberation Sans',sans-serif;transform:scaleX(0.9338);transform-origin:0 0;">Package :</div>
<div class="a" style="left:1379px;top:578px;width:242px;height:32px;background:#fff;border:1px solid #c4c4c4"></div>
<div class="t" style="left:1385.40px;top:587.91px;font-size:14.4px;line-height:14.4px;color:#aaa;font-weight:normal;font-family:'Liberation Sans',sans-serif;transform:scaleX(0.9668);transform-origin:0 0;">Enter the value</div>
<svg class="a" style="left:0;top:0" width="1920" height="1080" viewBox="0 0 1920 1080" fill="none" stroke="none" stroke-width="1.6" stroke-linecap="round" stroke-linejoin="round" ><path d="M1597.4,254.1 L1605,261.7 L1612.6,254.1" stroke="#555" stroke-width="1.2"/><circle cx="1865.6" cy="256.09999999999997" r="6.4" stroke="#555" stroke-width="1.3"/><path d="M1870.1,260.59999999999997 L1874.6,265.3" stroke="#555" stroke-width="1.5"/><circle cx="1603.6" cy="340.09999999999997" r="6.4" stroke="#555" stroke-width="1.3"/><path d="M1608.1,344.59999999999997 L1612.6,349.3" stroke="#555" stroke-width="1.5"/><circle cx="1865.6" cy="340.09999999999997" r="6.4" stroke="#555" stroke-width="1.3"/><path d="M1870.1,344.59999999999997 L1874.6,349.3" stroke="#555" stroke-width="1.5"/><rect x="1598" y="418.5" width="13.6" height="15.6" rx="1" stroke="#777" stroke-width="1.1"/><path d="M1600,422.5 H1609.6" stroke="#777" stroke-width="1.4"/><rect x="1599.8" y="425.7" width="2.4" height="2" fill="#999" stroke="none"/><rect x="1599.8" y="428.7" width="2.4" height="2" fill="#999" stroke="none"/><rect x="1603.2" y="425.7" width="2.4" height="2" fill="#999" stroke="none"/><rect x="1603.2" y="428.7" width="2.4" height="2" fill="#999" stroke="none"/><rect x="1606.6" y="425.7" width="2.4" height="2" fill="#999" stroke="none"/><rect x="1606.6" y="428.7" width="2.4" height="2" fill="#999" stroke="none"/><rect x="1859.2" y="419.6" width="15.8" height="13.4" rx="0.8" stroke="#777" stroke-width="1.1"/><path d="M1859.6,422.4 H1874.6" stroke="#777" stroke-width="2"/><path d="M1863,418.6 V420.6 M1871.2,418.6 V420.6" stroke="#777" stroke-width="1.1"/><rect x="1860.8" y="424.6" width="1.8" height="1.6" fill="#aaa" stroke="none"/><rect x="1860.8" y="427.4" width="1.8" height="1.6" fill="#aaa" stroke="none"/><rect x="1860.8" y="430.2" width="1.8" height="1.6" fill="#aaa" stroke="none"/><rect x="1863.8" y="424.6" width="1.8" height="1.6" fill="#aaa" stroke="none"/><rect x="1863.8" y="427.4" width="1.8" height="1.6" fill="#aaa" stroke="none"/><rect x="1863.8" y="430.2" width="1.8" height="1.6" fill="#aaa" stroke="none"/><rect x="1866.8" y="424.6" width="1.8" height="1.6" fill="#aaa" stroke="none"/><rect x="1866.8" y="427.4" width="1.8" height="1.6" fill="#aaa" stroke="none"/><rect x="1866.8" y="430.2" width="1.8" height="1.6" fill="#aaa" stroke="none"/><rect x="1869.8" y="424.6" width="1.8" height="1.6" fill="#aaa" stroke="none"/><rect x="1869.8" y="427.4" width="1.8" height="1.6" fill="#aaa" stroke="none"/><rect x="1869.8" y="430.2" width="1.8" height="1.6" fill="#aaa" stroke="none"/><rect x="1872.8" y="424.6" width="1.8" height="1.6" fill="#aaa" stroke="none"/><rect x="1872.8" y="427.4" width="1.8" height="1.6" fill="#aaa" stroke="none"/><rect x="1872.8" y="430.2" width="1.8" height="1.6" fill="#aaa" stroke="none"/><path d="M1597.4,506.09999999999997 L1605,513.7 L1612.6,506.09999999999997" stroke="#555" stroke-width="1.2"/><circle cx="1865.6" cy="508.09999999999997" r="6.4" stroke="#555" stroke-width="1.3"/><path d="M1870.1,512.6 L1874.6,517.3" stroke="#555" stroke-width="1.5"/><circle cx="1603.6" cy="592.1" r="6.4" stroke="#555" stroke-width="1.3"/><path d="M1608.1,596.6 L1612.6,601.3000000000001" stroke="#555" stroke-width="1.5"/></svg>
<div class="a" style="left:1379px;top:626.5px;width:531px;height:344px;border:1px solid #e0e0e0;background:#fff"></div>
<div class="a" style="left:1380px;top:667px;width:529px;height:1px;background:#e6e6e6"></div>
<div class="a" style="left:1380px;top:708px;width:529px;height:1px;background:#e6e6e6"></div>
<div class="a" style="left:1380px;top:668px;width:1px;height:302px;background:#e6e6e6"></div>
<div class="a" style="left:1908px;top:668px;width:1px;height:302px;background:#e6e6e6"></div>
<svg class="a" style="left:0;top:0" width="1920" height="1080" viewBox="0 0 1920 1080" fill="none" stroke="none" stroke-width="1.6" stroke-linecap="round" stroke-linejoin="round" ><path d="M1393,656.4 L1393.5,653.4 L1402.3,644.6 Q1403.1,643.8 1403.9,644.6 L1404.9,645.6 Q1405.7,646.4 1404.9,647.2 L1396.1,656 Z M1401,645.9 L1403.6,648.5 M1394.2,652.8 L1396.6,655.2" stroke="#2d63b0" stroke-width="1.1"/><path d="M1887,651 L1891.8,646.2 L1896.6,651" stroke="#111" stroke-width="2.2"/></svg>
<div class="t" style="left:1412.00px;top:640.98px;font-size:15.5px;line-height:15.5px;color:#1d4fa0;font-weight:normal;font-family:'Liberation Sans',sans-serif;transform:scaleX(1.0044);transform-origin:0 0;">Solicitor:</div>
<svg class="a" style="left:0;top:0" width="1920" height="1080" viewBox="0 0 1920 1080" fill="none" stroke="none" stroke-width="1.6" stroke-linecap="round" stroke-linejoin="round" ><path d="M1404.5,681 V695.6 M1397.2,688.3 H1411.8" stroke="#333" stroke-width="1.5" stroke-linecap="butt"/><path d="M1475,682.6 H1487 M1478.6,682.4 V680.6 H1483.4 V682.4 M1476.4,682.8 L1477.2,696 H1484.8 L1485.6,682.8 M1479,685 V693.6 M1481,685 V693.6 M1483,685 V693.6" stroke="#cfcfcf" stroke-width="1"/></svg>
<div class="t" style="left:1421.30px;top:682.13px;font-size:14.5px;line-height:14.5px;color:#444;font-weight:normal;font-family:'Liberation Sans',sans-serif;transform:scaleX(0.9569);transform-origin:0 0;">Add</div>
<div class="t" style="left:1497.20px;top:682.13px;font-size:14.5px;line-height:14.5px;color:#cacaca;font-weight:normal;font-family:'Liberation Sans',sans-serif;transform:scaleX(0.9732);transform-origin:0 0;">Delete</div>
<div class="a" style="left:1380px;top:745px;width:529px;height:1px;background:#e6e6e6"></div>
<div class="a" style="left:1507px;top:709px;width:1px;height:36px;background:#e6e6e6"></div>
<div class="a" style="left:1660px;top:709px;width:1px;height:36px;background:#e6e6e6"></div>
<div class="a" style="left:1743px;top:709px;width:1px;height:36px;background:#e6e6e6"></div>
<div class="a" style="left:1891px;top:709px;width:1px;height:36px;background:#e6e6e6"></div>
<div class="t" style="left:1390.60px;top:720.80px;font-size:15px;line-height:15px;color:#666;font-weight:normal;font-family:'Liberation Sans',sans-serif;transform:scaleX(1.0479);transform-origin:0 0;">Constituent ID</div>
<div class="t" style="left:1517.50px;top:720.80px;font-size:15px;line-height:15px;color:#666;font-weight:normal;font-family:'Liberation Sans',sans-serif;transform:scaleX(1.0378);transform-origin:0 0;">Constituent Name</div>
<div class="t" style="left:1677.30px;top:720.80px;font-size:15px;line-height:15px;color:#666;font-weight:normal;font-family:'Liberation Sans',sans-serif;transform:scaleX(1.0444);transform-origin:0 0;">Amount</div>
<div class="t" style="left:1391.50px;top:760.30px;font-size:15px;line-height:15px;color:#444;font-weight:normal;font-family:'Liberation Sans',sans-serif;transform:scaleX(1.0291);transform-origin:0 0;">No records to display</div>
<div class="a" style="left:1743px;top:746px;width:1px;height:41.5px;background:#e6e6e6"></div>
<div class="a" style="left:1891.4px;top:746px;width:16.6px;height:195.5px;background:#f0f0f0"></div>
<svg class="a" style="left:0;top:0" width="1920" height="1080" viewBox="0 0 1920 1080" fill="none" stroke="none" stroke-width="1.6" stroke-linecap="round" stroke-linejoin="round" ><path d="M1896.8,756.6 L1899.6,753.6 L1902.4,756.6 Z M1896.8,931.2 L1899.6,934.2 L1902.4,931.2 Z" fill="#8a8a8a"/></svg>
<svg class="a" style="left:0;top:0" width="1920" height="1080" viewBox="0 0 1920 1080" fill="none" stroke="none" stroke-width="1.6" stroke-linecap="round" stroke-linejoin="round" ><path d="M1393,948.6 V959.6 M1400.6,948.6 L1395,954.1 L1400.6,959.6 M1431.8,948.6 L1426.2,954.1 L1431.8,959.6 M1458.6,948.6 L1464.2,954.1 L1458.6,959.6 M1489.6,948.6 L1495.2,954.1 L1489.6,959.6 M1496.6,948.6 V959.6" stroke="#cfcfcf" stroke-width="1.1"/></svg>
<div class="t" style="left:1749.40px;top:947.90px;font-size:15px;line-height:15px;color:#444;font-weight:normal;font-family:'Liberation Sans',sans-serif;transform:scaleX(1.0243);transform-origin:0 0;">0 of 0 pages (0 items)</div>
</body></html>
